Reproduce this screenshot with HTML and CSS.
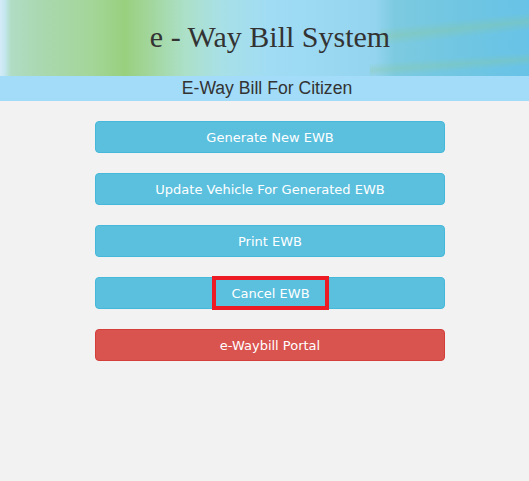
FILE: index.html
```html
<!DOCTYPE html>
<html lang="en">
<head>
<meta charset="utf-8">
<title>e - Way Bill System</title>
<link rel="stylesheet" href="styles.css">
</head>
<body>
<div class="page">
  <header class="banner">
    <h1 class="title">e - Way Bill System</h1>
  </header>
  <div class="subbar">E-Way Bill For Citizen</div>
  <main class="menu">
    <a class="btn btn-info" href="#">Generate New EWB</a>
    <a class="btn btn-info" href="#">Update Vehicle For Generated EWB</a>
    <a class="btn btn-info" href="#">Print EWB</a>
    <a class="btn btn-info" href="#"><span class="highlight">Cancel EWB</span></a>
    <a class="btn btn-danger" href="#">e-Waybill Portal</a>
  </main>
</div>
</body>
</html>
```
FILE: styles.css
```css
html, body {
  margin: 0;
  padding: 0;
}
html {
  overflow: hidden;
}
body {
  background: #f2f2f2;
  height: 481px;
}
.page {
  width: 540px;
}
.banner {
  height: 76px;
  display: flex;
  align-items: center;
  justify-content: center;
  background-color: #8fd2ec;
  background-image:
    linear-gradient(174deg, rgba(140,200,150,0) 30%, rgba(140,200,150,0.35) 40%, rgba(140,200,150,0) 50%),
    linear-gradient(176deg, rgba(140,200,150,0) 72%, rgba(140,200,150,0.3) 80%, rgba(140,200,150,0) 88%),
    linear-gradient(to right,
      #d4ecf8 0px, #c4e6ee 5px, #b0dcc4 11px, #aad8b0 40px, #a4d69a 90px,
      #98d07e 125px, #a2d69c 150px, #ace0c8 185px, #a8e0e6 220px,
      #a0dcf4 270px, #9ad8f2 330px, #94d4ee 375px, #7ccae0 395px,
      #70c6e2 460px, #66c2e8 540px);
  background-size: 160px 76px, 170px 76px, 100% 100%;
  background-position: 380px 0, 370px 0, 0 0;
  background-repeat: no-repeat;
}
.title {
  margin: 0 0 2px 0;
  font-family: "Liberation Serif", "Times New Roman", serif;
  font-weight: normal;
  font-size: 30px;
  color: #333;
  line-height: 1;
}
.subbar {
  height: 25px;
  line-height: 25px;
  padding-right: 6px;
  background: #a2dcf8;
  text-align: center;
  font-family: "Liberation Sans", Arial, sans-serif;
  font-size: 17.6px;
  color: #333;
}
.menu {
  width: 350px;
  margin: 20px auto 0;
  display: flex;
  flex-direction: column;
  gap: 20px;
}
.btn {
  box-sizing: border-box;
  height: 32px;
  display: flex;
  align-items: center;
  justify-content: center;
  border: 1px solid;
  border-radius: 4px;
  color: #fff;
  text-decoration: none;
  font-family: "DejaVu Sans", Verdana, sans-serif;
  font-size: 13px;
}
.btn-info {
  background: #5bc0de;
  border-color: #46b8da;
}
.btn-danger {
  background: #d9534f;
  border-color: #d43f3a;
}
.highlight {
  box-sizing: border-box;
  flex: none;
  width: 117px;
  height: 34px;
  border: 4px solid #ed1c24;
  display: flex;
  align-items: center;
  justify-content: center;
  margin-left: 1px;
}
```
